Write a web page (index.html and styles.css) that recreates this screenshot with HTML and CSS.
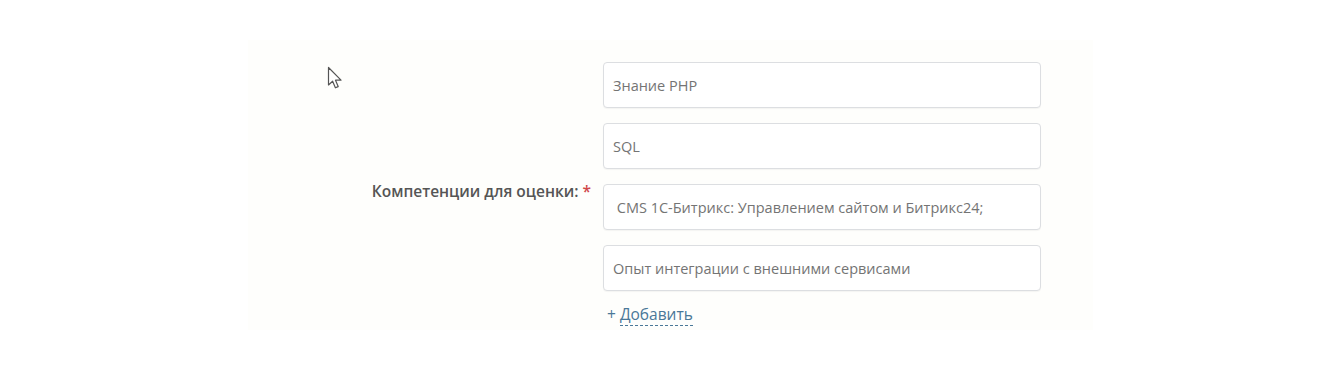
FILE: index.html
```html
<!DOCTYPE html>
<html lang="ru">
<head>
    <meta charset="UTF-8">
    <title>Компетенции</title>
    <link rel="stylesheet" href="styles.css">
</head>
<body>
    <div class="panel">
        <div class="field-row">
            <div class="field-label">Компетенции для оценки: <span class="req">*</span></div>
            <div class="field-body">
                <input class="field-input" type="text" value="Знание PHP">
                <input class="field-input" type="text" value="SQL">
                <input class="field-input" type="text" value=" CMS 1С-Битрикс: Управлением сайтом и Битрикс24;">
                <input class="field-input" type="text" value="Опыт интеграции с внешними сервисами">
                <a class="add-link" href="#">+ <span>Добавить</span></a>
            </div>
        </div>
    </div>

    <svg class="cursor" width="18" height="26" viewBox="0 0 18 26">
        <path d="M1.5 1.5 L1.5 19 L5.6 15.2 L8.4 21.8 L11.2 20.6 L8.5 14.2 L14 14.2 Z"
              fill="#fff" stroke="#555" stroke-width="1.2" stroke-linejoin="round"/>
    </svg>
</body>
</html>
```

FILE: styles.css
```css
body {
    margin: 0;
    background: #ffffff;
    font-family: "Open Sans", "Liberation Sans", Arial, sans-serif;
    color: #333;
    height: 378px;
    overflow: hidden;
    position: relative;
}

.panel {
    margin: 40px 0 0 248px;
    width: 845px;
    height: 290px;
    background: #fefefc;
    padding-top: 22px;
    box-sizing: border-box;
}

.field-row {
    display: flex;
    align-items: center;
}

.field-label {
    width: 355px;
    text-align: right;
    padding-right: 12px;
    box-sizing: border-box;
    font-size: 15.5px;
    font-weight: 600;
    color: #555;
    margin-top: -6px;
}

.req {
    color: #d0474a;
}

.field-body {
    display: flex;
    flex-direction: column;
    gap: 15px;
    width: 438px;
}

.field-input {
    height: 46px;
    width: 100%;
    box-sizing: border-box;
    border: 1px solid #dcdee1;
    border-radius: 4px;
    background: #fff;
    box-shadow: 0 1px 1px rgba(0, 0, 0, 0.04);
    padding: 0 9px;
    font-family: inherit;
    font-size: 14.5px;
    color: #747474;
    outline: none;
}

.add-link {
    margin-top: -3px;
    align-self: flex-start;
    margin-left: 4px;
    font-size: 15.5px;
    color: #4a7898;
    text-decoration: none;
}

.add-link span {
    border-bottom: 1px dashed #4a7898;
}

.cursor {
    position: absolute;
    left: 327px;
    top: 66px;
}
```
